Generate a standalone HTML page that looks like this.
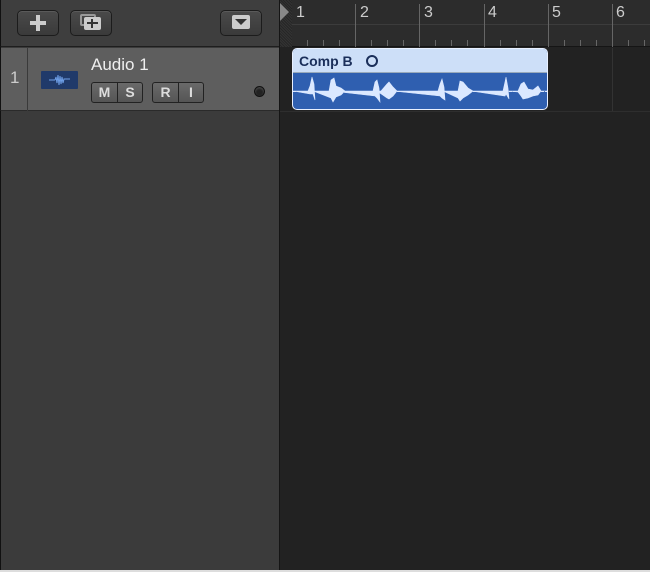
<!DOCTYPE html>
<html><head><style>
*{margin:0;padding:0;box-sizing:border-box}
body{width:650px;height:572px;background:#222;position:relative;overflow:hidden;font-family:"Liberation Sans",sans-serif}
.abs{position:absolute}
.btn{position:absolute;border:1px solid #1c1c1c;border-radius:5px;background:linear-gradient(#4a4a4a,#3a3a3a);box-shadow:inset 0 1px 0 #5a5a5a}
.ms{position:absolute;top:82px;height:21px;border:1px solid #222;border-radius:3px;background:linear-gradient(#6a6a6a,#555);display:flex}
.ms span{display:block;width:25px;text-align:center;color:#ddd;font-weight:bold;font-size:14px;line-height:19px}
.ms span+span{border-left:1px solid #222}
</style></head><body>
<div class="abs" style="left:0;top:0;width:279px;height:572px;background:#3b3b3b;border-left:1px solid #111"></div>
<div class="abs" style="left:0;top:0;width:279px;height:47px;background:#3e3e3e;border-bottom:1px solid #1e1e1e;border-left:1px solid #111"></div>
<div class="btn" style="left:17px;top:10px;width:42px;height:26px"></div>
<div class="abs" style="left:30px;top:21px;width:16px;height:4px;background:#ccc"></div>
<div class="abs" style="left:36px;top:15px;width:4px;height:16px;background:#ccc"></div>
<div class="btn" style="left:70px;top:10px;width:42px;height:26px"></div>
<div class="abs" style="left:80px;top:14px;width:16px;height:12px;border:2px solid #999;border-radius:2px"></div>
<div class="abs" style="left:84px;top:17px;width:17px;height:13px;background:#ccc;border-radius:2px"></div>
<div class="abs" style="left:87px;top:22px;width:11px;height:2px;background:#333"></div>
<div class="abs" style="left:91px;top:19px;width:2px;height:9px;background:#333"></div>
<div class="btn" style="left:220px;top:10px;width:42px;height:26px"></div>
<div class="abs" style="left:232px;top:15px;width:18px;height:14px;background:#ccc;border-radius:2px"></div>
<div class="abs" style="left:235px;top:19px;width:0;height:0;border-left:6px solid transparent;border-right:6px solid transparent;border-top:6px solid #333"></div>
<div class="abs" style="left:0;top:48px;width:279px;height:63px;background:#5e5e5e;border-bottom:1px solid #2a2a2a;border-left:1px solid #111"></div>
<div class="abs" style="left:27px;top:48px;width:1px;height:63px;background:#3a3a3a"></div>
<div class="abs" style="left:10px;top:68px;color:#ccc;font-size:17px">1</div>
<div class="abs" style="left:41px;top:71px;width:37px;height:18px;background:#203a6a;border-radius:1px"></div>
<svg class="abs" style="left:41px;top:71px" width="37" height="18"><path d="M8 9H14M14 9L15 6L16 12L17 4L18 14L19 5L20 13L21 6L22 12L23 8H29" stroke="#6fa0e8" fill="none" stroke-width="1"/></svg>
<div class="abs" style="left:91px;top:55px;color:#eee;font-size:17px">Audio 1</div>
<div class="ms" style="left:91px"><span>M</span><span>S</span></div>
<div class="ms" style="left:152px"><span>R</span><span>I</span></div>
<div class="abs" style="left:254px;top:86px;width:11px;height:11px;border-radius:50%;background:#222;border:1px solid #111;box-shadow:inset 0 1px 2px #555"></div>
<div class="abs" style="left:279px;top:0;width:1px;height:572px;background:#151515"></div>
<div class="abs" style="left:280px;top:0;width:370px;height:47px;background:#2c2c2c;border-bottom:1px solid #151515"></div>
<div class="abs" style="left:280px;top:24px;width:370px;height:1px;background:#3c3c3c"></div>
<div class="abs" style="left:280px;top:0;width:12px;height:47px;background:repeating-linear-gradient(45deg,#333 0 1px,#262626 1px 2px)"></div>
<div class="abs" style="left:280px;top:3px;width:0;height:0;border-top:9px solid transparent;border-bottom:9px solid transparent;border-left:9px solid #888"></div>
<svg class="abs" style="left:280px;top:0" width="370" height="572">
<g stroke="#666" stroke-width="1">
<path d="M75.5 4V47M139.5 4V47M204.5 4V47M268.5 4V47M332.5 4V47"/>
<path d="M27.5 40V46M43.5 40V46M59.5 40V46M91.5 40V46M107.5 40V46M123.5 40V46M155.5 40V46M171.5 40V46M187.5 40V46M220.5 40V46M236.5 40V46M252.5 40V46M284.5 40V46M300.5 40V46M316.5 40V46M348.5 40V46M364.5 40V46"/>
</g>
<path d="M332.5 48V111" stroke="#333"/>
<path d="M0 111.5H370" stroke="#2e2e2e"/>
<g fill="#ccc" font-family="Liberation Sans" font-size="16"><text x="16" y="17">1</text><text x="80" y="17">2</text><text x="144" y="17">3</text><text x="208" y="17">4</text><text x="272" y="17">5</text><text x="336" y="17">6</text></g>
</svg>
<div class="abs" style="left:292px;top:48px;width:256px;height:62px;border:1px solid #e8f0ff;border-radius:5px;background:#2f5fb0;overflow:hidden">
<div style="height:24px;background:#cddff8;border-bottom:1px solid #9ab"></div>
</div>
<div class="abs" style="left:299px;top:53px;color:#1b2f5a;font-weight:bold;font-size:14px">Comp B</div>
<div class="abs" style="left:366px;top:55px;width:12px;height:12px;border:2px solid #1b2f5a;border-radius:50%"></div>
<svg class="abs" style="left:293px;top:74px" width="254" height="34">
<path fill="#dbe8ff" stroke="#dbe8ff" stroke-width="0.6" d="M0 17H15L17 12L19 3L21 10L22 26L20 20L17 20Z M20 17H36L38 6L41 4L43 12L48 14L52 17L48 21L43 23L40 28L38 24Z M38 17H80L82 8L84 6L86 14L87 28L84 24L82 22Z M84 17L88 17L94 10L96 8L100 13L104 17L100 22L96 25L94 24Z M100 17H145L147 10L149 5L151 13L152 26L149 24L147 22Z M150 17H165L167 7L170 8L175 14L180 17L175 21L170 24L167 27L165 24Z M178 17H210L212 8L213 3L215 14L216 25L213 20L212 22Z M214 17H225L228 10L231 8L235 15L240 16L245 12L248 17L245 21L240 22L235 24L230 25L228 22L225 18Z M245 17H254"/>
<path d="M0 17.5H254" stroke="#dbe8ff" stroke-width="1" stroke-dasharray="3 1"/>
</svg>
<div class="abs" style="left:0;top:570px;width:650px;height:2px;background:#ddd"></div>
</body></html>
